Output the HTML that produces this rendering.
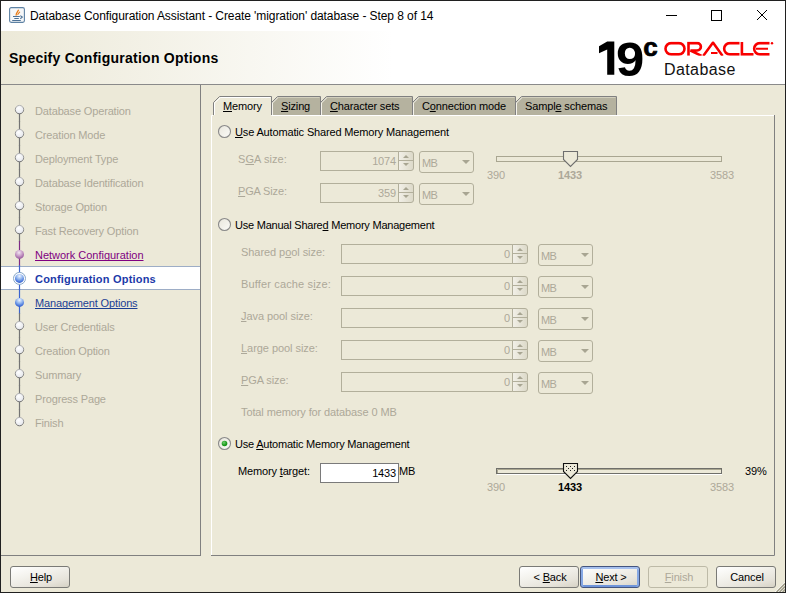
<!DOCTYPE html>
<html><head><meta charset="utf-8">
<style>
*{margin:0;padding:0;box-sizing:border-box}
html,body{width:786px;height:593px;overflow:hidden;background:#ECE9D8}
body{position:relative;font-family:"Liberation Sans",sans-serif;font-size:11px;color:#000}
.a{position:absolute;white-space:nowrap}
.t{letter-spacing:-0.15px;line-height:12px}
.ul{text-decoration:underline;text-decoration-skip-ink:none}
.btn{top:566px;height:22px;width:60px;border:1px solid #7A7A76;border-radius:3px;background:linear-gradient(165deg,#FFFFFF 0,#F4F3EE 35%,#E6E3DA 75%,#D6D2C5 100%)}
svg.ov{position:absolute;left:0;top:0}
</style></head><body>
<div class="a" style="left:0;top:0;width:786px;height:593px;border:1px solid #202020"></div>
<div class="a" style="left:1px;top:1px;width:784px;height:30px;background:#fff"></div>
<div class="a" style="left:1px;top:31px;width:784px;height:53px;background:linear-gradient(to right,#ECE9D8 0,#FFFFFF 392px)"></div>
<div class="a" style="left:1px;top:84px;width:784px;height:1px;background:#8A8A8A"></div>
<div class="a" style="left:200px;top:85px;width:1px;height:471px;background:#808080"></div>
<div class="a" style="left:1px;top:555px;width:200px;height:1px;background:#808080"></div>
<div class="a" style="left:1px;top:266px;width:199px;height:24px;background:#fff;border-top:1px solid #9DADC6;border-bottom:1px solid #9DADC6"></div>
<div class="a" style="left:320px;top:151px;width:79px;height:20px;border:1px solid #B2AF9B"></div>
<div class="a" style="left:419px;top:151px;width:55px;height:22px;border:1px solid #B2AF9B;border-radius:3px"></div>
<div class="a" style="left:320px;top:183px;width:79px;height:20px;border:1px solid #B2AF9B"></div>
<div class="a" style="left:419px;top:183px;width:55px;height:22px;border:1px solid #B2AF9B;border-radius:3px"></div>
<div class="a" style="left:341px;top:244px;width:172px;height:20px;border:1px solid #B2AF9B"></div>
<div class="a" style="left:538px;top:244px;width:55px;height:22px;border:1px solid #B2AF9B;border-radius:3px"></div>
<div class="a" style="left:341px;top:276px;width:172px;height:20px;border:1px solid #B2AF9B"></div>
<div class="a" style="left:538px;top:276px;width:55px;height:22px;border:1px solid #B2AF9B;border-radius:3px"></div>
<div class="a" style="left:341px;top:308px;width:172px;height:20px;border:1px solid #B2AF9B"></div>
<div class="a" style="left:538px;top:308px;width:55px;height:22px;border:1px solid #B2AF9B;border-radius:3px"></div>
<div class="a" style="left:341px;top:340px;width:172px;height:20px;border:1px solid #B2AF9B"></div>
<div class="a" style="left:538px;top:340px;width:55px;height:22px;border:1px solid #B2AF9B;border-radius:3px"></div>
<div class="a" style="left:341px;top:372px;width:172px;height:20px;border:1px solid #B2AF9B"></div>
<div class="a" style="left:538px;top:372px;width:55px;height:22px;border:1px solid #B2AF9B;border-radius:3px"></div>
<div class="a" style="left:320px;top:463px;width:79px;height:20px;background:#fff;border:1px solid #7A7A7A"></div>
<div class="a btn" style="left:10px"></div>
<div class="a btn" style="left:519px"></div>
<div class="a btn" style="left:580px;border-color:#44557F;box-shadow:inset 0 2px 0 #A6C0EE,inset 2px 0 0 #86A8E4,inset -2px 0 0 #86A8E4,inset 0 -2px 0 #6F95DA"></div>
<div class="a" style="left:648px;top:566px;width:60px;height:22px;border:1px solid #BDBAA7;border-radius:3px"></div>
<div class="a btn" style="left:716px"></div>
<svg class="ov" width="786" height="593" viewBox="0 0 786 593">
<defs>
<radialGradient id="gDis" cx="0.4" cy="0.35" r="0.7"><stop offset="0" stop-color="#FFFFFF"/><stop offset="1" stop-color="#E2E4EA"/></radialGradient>
<radialGradient id="gPur" cx="0.45" cy="0.3" r="0.75"><stop offset="0" stop-color="#F2E6F2"/><stop offset="0.5" stop-color="#C79BC7"/><stop offset="1" stop-color="#8E4C95"/></radialGradient>
<radialGradient id="gBlu" cx="0.5" cy="0.25" r="0.8"><stop offset="0" stop-color="#EEF4FF"/><stop offset="0.45" stop-color="#8DB2EE"/><stop offset="0.85" stop-color="#3A68D6"/><stop offset="1" stop-color="#2648B0"/></radialGradient>
<linearGradient id="gDisB" x1="0" y1="0" x2="0" y2="1"><stop offset="0" stop-color="#B4B4B4"/><stop offset="1" stop-color="#6E6E6E"/></linearGradient>
<linearGradient id="gRad" x1="0" y1="0" x2="1" y2="1"><stop offset="0" stop-color="#E8E6DC"/><stop offset="1" stop-color="#FBFBF8"/></linearGradient>
<radialGradient id="gGrn" cx="0.4" cy="0.35" r="0.7"><stop offset="0" stop-color="#74CF74"/><stop offset="0.6" stop-color="#22A022"/><stop offset="1" stop-color="#0C8A10"/></radialGradient>
<linearGradient id="gSpin" x1="0" y1="0" x2="1" y2="0"><stop offset="0" stop-color="#F2F0E8"/><stop offset="1" stop-color="#DCD9C8"/></linearGradient>
</defs>
<g>
 <rect x="9.6" y="7.6" width="14.8" height="14.8" rx="1.6" fill="#F6F7F8" stroke="#5E82A4" stroke-width="1.1"/>
 <path d="M16.3 15.6 C15.2 13.6 17.6 12.2 18.6 9.8" stroke="#EA7A12" stroke-width="1.3" fill="none"/>
 <path d="M17.9 15 C17.3 13.6 19.2 13.1 19.8 11.7" stroke="#EA7A12" stroke-width="1.1" fill="none"/>
 <path d="M13 16.5 H19.8 M14.3 18.5 H18.8 M12.2 20.5 H20.8" stroke="#4D7196" stroke-width="1.1"/>
 <path d="M20.3 15.6 L22.3 17.1 L20.3 18.7" stroke="#4D7196" stroke-width="1.1" fill="none"/>
</g>
<line x1="666" y1="15.5" x2="677" y2="15.5" stroke="#000" stroke-width="1"/>
<rect x="711.5" y="10.5" width="10" height="10" fill="none" stroke="#000" stroke-width="1"/>
<path d="M757 10 L767 20 M767 10 L757 20" stroke="#000" stroke-width="1"/>
<path d="M599 46.3 L607.2 41.6 H614.3 V74.8 H607.2 V49.6 L599 53.2 Z" fill="#000"/>
<clipPath id="clO"><rect x="660" y="41.6" width="120" height="14.2"/></clipPath>
<g fill="none" stroke="#F80000" stroke-width="2.6" clip-path="url(#clO)">
 <rect x="665.5" y="43.1" width="19" height="11.3" rx="5.65"/>
 <path d="M688.5 55.7 V43.1 H697.2 A3.7 3.7 0 0 1 697.2 50.5 H690.5 L701.5 55.8"/>
 <path d="M703.2 55.9 L713 42.6 L722.6 55.9"/>
 <path d="M711 53 H717.5" stroke-width="2.2"/>
 <path d="M739.5 43.1 H729.8 A5.65 5.65 0 0 0 729.8 54.4 H739.5"/>
 <path d="M741.9 42 V54.4 H753.5"/>
 <path d="M769.5 43.1 H759.8 A5.65 5.65 0 0 0 759.8 54.4 H769.5"/>
 <path d="M756 48.75 H768" stroke-width="2.2"/>
</g>
<circle cx="772" cy="43.3" r="1.2" fill="#F80000"/>
<line x1="19.5" y1="109.6" x2="19.5" y2="122.1" stroke="#747474" stroke-width="1.2"/>
<circle cx="19.5" cy="109.6" r="4.2" fill="url(#gDis)" stroke="url(#gDisB)" stroke-width="1"/>
<line x1="19.5" y1="121.1" x2="19.5" y2="133.6" stroke="#747474" stroke-width="1.2"/>
<line x1="19.5" y1="133.6" x2="19.5" y2="146.1" stroke="#747474" stroke-width="1.2"/>
<circle cx="19.5" cy="133.6" r="4.2" fill="url(#gDis)" stroke="url(#gDisB)" stroke-width="1"/>
<line x1="19.5" y1="145.1" x2="19.5" y2="157.6" stroke="#747474" stroke-width="1.2"/>
<line x1="19.5" y1="157.6" x2="19.5" y2="170.1" stroke="#747474" stroke-width="1.2"/>
<circle cx="19.5" cy="157.6" r="4.2" fill="url(#gDis)" stroke="url(#gDisB)" stroke-width="1"/>
<line x1="19.5" y1="169.1" x2="19.5" y2="181.6" stroke="#747474" stroke-width="1.2"/>
<line x1="19.5" y1="181.6" x2="19.5" y2="194.1" stroke="#747474" stroke-width="1.2"/>
<circle cx="19.5" cy="181.6" r="4.2" fill="url(#gDis)" stroke="url(#gDisB)" stroke-width="1"/>
<line x1="19.5" y1="193.1" x2="19.5" y2="205.6" stroke="#747474" stroke-width="1.2"/>
<line x1="19.5" y1="205.6" x2="19.5" y2="218.1" stroke="#747474" stroke-width="1.2"/>
<circle cx="19.5" cy="205.6" r="4.2" fill="url(#gDis)" stroke="url(#gDisB)" stroke-width="1"/>
<line x1="19.5" y1="217.1" x2="19.5" y2="229.6" stroke="#747474" stroke-width="1.2"/>
<line x1="19.5" y1="229.6" x2="19.5" y2="242.1" stroke="#747474" stroke-width="1.2"/>
<circle cx="19.5" cy="229.6" r="4.2" fill="url(#gDis)" stroke="url(#gDisB)" stroke-width="1"/>
<line x1="19.5" y1="241.1" x2="19.5" y2="253.6" stroke="#7E2A86" stroke-width="1.2"/>
<line x1="19.5" y1="253.6" x2="19.5" y2="266.1" stroke="#7E2A86" stroke-width="1.2"/>
<circle cx="19.5" cy="254.4" r="4.5" fill="url(#gPur)"/>
<line x1="19.5" y1="265.1" x2="19.5" y2="277.6" stroke="#3B63CF" stroke-width="1.2"/>
<line x1="19.5" y1="277.6" x2="19.5" y2="290.1" stroke="#3B63CF" stroke-width="1.2"/>
<circle cx="19.5" cy="278.40000000000003" r="6" fill="#fff" stroke="#86A6C8" stroke-width="1"/>
<circle cx="19.5" cy="278.40000000000003" r="4.5" fill="url(#gBlu)"/>
<line x1="19.5" y1="289.1" x2="19.5" y2="301.6" stroke="#3B63CF" stroke-width="1.2"/>
<line x1="19.5" y1="301.6" x2="19.5" y2="314.1" stroke="#3B63CF" stroke-width="1.2"/>
<circle cx="19.5" cy="302.40000000000003" r="4.5" fill="url(#gBlu)"/>
<line x1="19.5" y1="313.1" x2="19.5" y2="325.6" stroke="#747474" stroke-width="1.2"/>
<line x1="19.5" y1="325.6" x2="19.5" y2="338.1" stroke="#747474" stroke-width="1.2"/>
<circle cx="19.5" cy="325.6" r="4.2" fill="url(#gDis)" stroke="url(#gDisB)" stroke-width="1"/>
<line x1="19.5" y1="337.1" x2="19.5" y2="349.6" stroke="#747474" stroke-width="1.2"/>
<line x1="19.5" y1="349.6" x2="19.5" y2="362.1" stroke="#747474" stroke-width="1.2"/>
<circle cx="19.5" cy="349.6" r="4.2" fill="url(#gDis)" stroke="url(#gDisB)" stroke-width="1"/>
<line x1="19.5" y1="361.1" x2="19.5" y2="373.6" stroke="#747474" stroke-width="1.2"/>
<line x1="19.5" y1="373.6" x2="19.5" y2="386.1" stroke="#747474" stroke-width="1.2"/>
<circle cx="19.5" cy="373.6" r="4.2" fill="url(#gDis)" stroke="url(#gDisB)" stroke-width="1"/>
<line x1="19.5" y1="385.1" x2="19.5" y2="397.6" stroke="#747474" stroke-width="1.2"/>
<line x1="19.5" y1="397.6" x2="19.5" y2="410.1" stroke="#747474" stroke-width="1.2"/>
<circle cx="19.5" cy="397.6" r="4.2" fill="url(#gDis)" stroke="url(#gDisB)" stroke-width="1"/>
<line x1="19.5" y1="409.1" x2="19.5" y2="421.6" stroke="#747474" stroke-width="1.2"/>
<circle cx="19.5" cy="421.6" r="4.2" fill="url(#gDis)" stroke="url(#gDisB)" stroke-width="1"/>
<path d="M211.5 556 V115.5 H213" stroke="#fff" stroke-width="1" fill="none"/>
<path d="M271.5 115.5 H774.5 V555.5 H211" stroke="#fff" stroke-width="1" fill="none"/>
<path d="M774.5 115 V555.5 H211" stroke="#808080" stroke-width="1" fill="none"/>
<path d="M214.5 115 V103 L220.5 97.5 H270.5" stroke="#fff" fill="none"/>
<path d="M213.5 115 V102.5 L219.5 96.5 H271.5 V115" stroke="#808080" fill="none"/>
<path d="M272 115 V102.8 L277.8 97 H320 V115 Z" fill="#B5B29F"/>
<path d="M272.5 115 V103 L278 97.5" stroke="#F4F2EA" fill="none"/>
<path d="M278 97.5 H319.5" stroke="#D2CFBD" fill="none"/>
<path d="M277.5 96.5 H320.5 V115" stroke="#808080" fill="none"/>
<path d="M271.5 102.5 L277.5 96.5" stroke="#808080" fill="none"/>
<path d="M321 115 V102.8 L326.8 97 H412 V115 Z" fill="#B5B29F"/>
<path d="M321.5 115 V103 L327 97.5" stroke="#F4F2EA" fill="none"/>
<path d="M327 97.5 H411.5" stroke="#D2CFBD" fill="none"/>
<path d="M326.5 96.5 H412.5 V115" stroke="#808080" fill="none"/>
<path d="M320.5 102.5 L326.5 96.5" stroke="#808080" fill="none"/>
<path d="M413 115 V102.8 L418.8 97 H515 V115 Z" fill="#B5B29F"/>
<path d="M413.5 115 V103 L419 97.5" stroke="#F4F2EA" fill="none"/>
<path d="M419 97.5 H514.5" stroke="#D2CFBD" fill="none"/>
<path d="M418.5 96.5 H515.5 V115" stroke="#808080" fill="none"/>
<path d="M412.5 102.5 L418.5 96.5" stroke="#808080" fill="none"/>
<path d="M516 115 V102.8 L521.8 97 H616 V115 Z" fill="#B5B29F"/>
<path d="M516.5 115 V103 L522 97.5" stroke="#F4F2EA" fill="none"/>
<path d="M522 97.5 H615.5" stroke="#D2CFBD" fill="none"/>
<path d="M521.5 96.5 H616.5 V115" stroke="#808080" fill="none"/>
<path d="M515.5 102.5 L521.5 96.5" stroke="#808080" fill="none"/>
<circle cx="224.5" cy="131.5" r="6" fill="url(#gRad)" stroke="#8A8A8A" stroke-width="1.1"/>
<circle cx="224.5" cy="224.5" r="6" fill="url(#gRad)" stroke="#8A8A8A" stroke-width="1.1"/>
<circle cx="224.5" cy="443.5" r="6" fill="url(#gRad)" stroke="#8A8A8A" stroke-width="1.1"/>
<circle cx="224.5" cy="443.5" r="2.8" fill="url(#gGrn)"/>
<path d="M398.5 151.5 H411 Q413.5 151.5 413.5 154 V168 Q413.5 170.5 411 170.5 H398.5 Z" fill="url(#gSpin)" stroke="#B2AF9B"/>
<line x1="399" y1="160.5" x2="413" y2="160.5" stroke="#B2AF9B"/>
<path d="M403.0 158 L406.0 155 L409.0 158 Z" fill="#A8A592"/>
<path d="M403.0 163 L406.0 166 L409.0 163 Z" fill="#A8A592"/>
<path d="M462 160 H470 L466 164 Z" fill="#A8A592"/>
<path d="M398.5 183.5 H411 Q413.5 183.5 413.5 186 V200 Q413.5 202.5 411 202.5 H398.5 Z" fill="url(#gSpin)" stroke="#B2AF9B"/>
<line x1="399" y1="192.5" x2="413" y2="192.5" stroke="#B2AF9B"/>
<path d="M403.0 190 L406.0 187 L409.0 190 Z" fill="#A8A592"/>
<path d="M403.0 195 L406.0 198 L409.0 195 Z" fill="#A8A592"/>
<path d="M462 192 H470 L466 196 Z" fill="#A8A592"/>
<rect x="496.5" y="156.5" width="225" height="5" fill="#ECE9D8" stroke="#A9A691"/>
<path d="M563.5 151.5 H577.5 V159.5 L570.5 166.5 L563.5 159.5 Z" fill="#ECE9D8" stroke="#6E6E6E" stroke-width="1.1"/>
<path d="M512.5 244.5 H525 Q527.5 244.5 527.5 247 V261 Q527.5 263.5 525 263.5 H512.5 Z" fill="url(#gSpin)" stroke="#B2AF9B"/>
<line x1="513" y1="253.5" x2="527" y2="253.5" stroke="#B2AF9B"/>
<path d="M517.0 251 L520.0 248 L523.0 251 Z" fill="#A8A592"/>
<path d="M517.0 256 L520.0 259 L523.0 256 Z" fill="#A8A592"/>
<path d="M581 253 H589 L585 257 Z" fill="#A8A592"/>
<path d="M512.5 276.5 H525 Q527.5 276.5 527.5 279 V293 Q527.5 295.5 525 295.5 H512.5 Z" fill="url(#gSpin)" stroke="#B2AF9B"/>
<line x1="513" y1="285.5" x2="527" y2="285.5" stroke="#B2AF9B"/>
<path d="M517.0 283 L520.0 280 L523.0 283 Z" fill="#A8A592"/>
<path d="M517.0 288 L520.0 291 L523.0 288 Z" fill="#A8A592"/>
<path d="M581 285 H589 L585 289 Z" fill="#A8A592"/>
<path d="M512.5 308.5 H525 Q527.5 308.5 527.5 311 V325 Q527.5 327.5 525 327.5 H512.5 Z" fill="url(#gSpin)" stroke="#B2AF9B"/>
<line x1="513" y1="317.5" x2="527" y2="317.5" stroke="#B2AF9B"/>
<path d="M517.0 315 L520.0 312 L523.0 315 Z" fill="#A8A592"/>
<path d="M517.0 320 L520.0 323 L523.0 320 Z" fill="#A8A592"/>
<path d="M581 317 H589 L585 321 Z" fill="#A8A592"/>
<path d="M512.5 340.5 H525 Q527.5 340.5 527.5 343 V357 Q527.5 359.5 525 359.5 H512.5 Z" fill="url(#gSpin)" stroke="#B2AF9B"/>
<line x1="513" y1="349.5" x2="527" y2="349.5" stroke="#B2AF9B"/>
<path d="M517.0 347 L520.0 344 L523.0 347 Z" fill="#A8A592"/>
<path d="M517.0 352 L520.0 355 L523.0 352 Z" fill="#A8A592"/>
<path d="M581 349 H589 L585 353 Z" fill="#A8A592"/>
<path d="M512.5 372.5 H525 Q527.5 372.5 527.5 375 V389 Q527.5 391.5 525 391.5 H512.5 Z" fill="url(#gSpin)" stroke="#B2AF9B"/>
<line x1="513" y1="381.5" x2="527" y2="381.5" stroke="#B2AF9B"/>
<path d="M517.0 379 L520.0 376 L523.0 379 Z" fill="#A8A592"/>
<path d="M517.0 384 L520.0 387 L523.0 384 Z" fill="#A8A592"/>
<path d="M581 381 H589 L585 385 Z" fill="#A8A592"/>
<rect x="496.5" y="468.5" width="225" height="5" fill="#ECE9D8" stroke="#6F6F6A"/>
<path d="M497.5 473 V469.5 H721" stroke="#A9A690" fill="none"/>
<line x1="497" y1="474.5" x2="722" y2="474.5" stroke="#fff"/>
<path d="M563.5 463.5 H577.5 V471.5 L570.5 478.5 L563.5 471.5 Z" fill="#ECE9D8" stroke="#111" stroke-width="1.1"/>
<rect x="566" y="466" width="1" height="1" fill="#222"/>
<rect x="570" y="466" width="1" height="1" fill="#222"/>
<rect x="574" y="466" width="1" height="1" fill="#222"/>
<rect x="568" y="468" width="1" height="1" fill="#222"/>
<rect x="572" y="468" width="1" height="1" fill="#222"/>
<rect x="566" y="470" width="1" height="1" fill="#222"/>
<rect x="570" y="470" width="1" height="1" fill="#222"/>
<rect x="574" y="470" width="1" height="1" fill="#222"/>
<clipPath id="clG"><rect x="770" y="578" width="15" height="14"/></clipPath><g clip-path="url(#clG)"><path d="M775.2 592 L785 582.2 M778.2 592 L785 585.2 M781.2 592 L785 588.2" stroke="#FFFFFF" stroke-width="1"/><path d="M776.6 592 L785 583.6 M779.6 592 L785 586.6 M782.6 592 L785 589.6" stroke="#A09D88" stroke-width="1.5"/></g>
</svg>
<div class="a" style="left:30px;top:9px;font-size:12px;line-height:15px;letter-spacing:-0.08px">Database Configuration Assistant - Create 'migration' database - Step 8 of 14</div>
<div class="a" style="left:9px;top:50px;font-size:14px;font-weight:bold;line-height:16px;letter-spacing:0.25px">Specify Configuration Options</div>
<div class="a" style="left:616px;top:34.6px;font-size:48px;font-weight:bold;line-height:50px;transform:scaleX(1.06);transform-origin:0 0">9</div>
<div class="a" style="left:643.3px;top:32.7px;font-size:26px;font-weight:bold;line-height:28px;-webkit-text-stroke:0.7px #000">c</div>
<div class="a" style="left:664px;top:61px;font-size:16px;line-height:18px;letter-spacing:0.4px;color:#111">Database</div>
<div class="a t" style="left:35px;top:105px;color:#ACA899">Database Operation</div>
<div class="a t" style="left:35px;top:129px;color:#ACA899">Creation Mode</div>
<div class="a t" style="left:35px;top:153px;color:#ACA899">Deployment Type</div>
<div class="a t" style="left:35px;top:177px;color:#ACA899">Database Identification</div>
<div class="a t" style="left:35px;top:201px;color:#ACA899">Storage Option</div>
<div class="a t" style="left:35px;top:225px;color:#ACA899">Fast Recovery Option</div>
<div class="a t" style="left:35px;top:249px;color:#800080;letter-spacing:-0.015px"><span class="ul">Network Configuration</span></div>
<div class="a t" style="left:35px;top:273px;color:#1C3AA9;font-weight:bold;letter-spacing:0.2px">Configuration Options</div>
<div class="a t" style="left:35px;top:297px;color:#1C3F94"><span class="ul">Management Options</span></div>
<div class="a t" style="left:35px;top:321px;color:#ACA899">User Credentials</div>
<div class="a t" style="left:35px;top:345px;color:#ACA899">Creation Option</div>
<div class="a t" style="left:35px;top:369px;color:#ACA899">Summary</div>
<div class="a t" style="left:35px;top:393px;color:#ACA899">Progress Page</div>
<div class="a t" style="left:35px;top:417px;color:#ACA899">Finish</div>
<div class="a t" style="left:223px;top:100px;"><span class="ul">M</span>emory</div>
<div class="a t" style="left:281px;top:100px;"><span class="ul">S</span>izing</div>
<div class="a t" style="left:330px;top:100px;"><span class="ul">C</span>haracter sets</div>
<div class="a t" style="left:422px;top:100px;">C<span class="ul">o</span>nnection mode</div>
<div class="a t" style="left:525px;top:100px;">Sampl<span class="ul">e</span> schemas</div>
<div class="a t" style="left:235px;top:126px;"><span class="ul">U</span>se Automatic Shared Memory Management</div>
<div class="a t" style="left:235px;top:219px;letter-spacing:-0.225px">Use Manual Share<span class="ul">d</span> Memory Management</div>
<div class="a t" style="left:235px;top:438px;letter-spacing:-0.21px">Use <span class="ul">A</span>utomatic Memory Management</div>
<div class="a t" style="left:238px;top:153px;color:#ACA899;letter-spacing:0.06px">S<span class="ul">G</span>A size:</div>
<div class="a t" style="left:320px;top:155px;width:76px;text-align:right;color:#ACA899">1074</div>
<div class="a t" style="left:422px;top:157px;color:#ACA899;letter-spacing:-0.6px">MB</div>
<div class="a t" style="left:238px;top:185px;color:#ACA899"><span class="ul">P</span>GA Size:</div>
<div class="a t" style="left:320px;top:187px;width:76px;text-align:right;color:#ACA899">359</div>
<div class="a t" style="left:422px;top:189px;color:#ACA899;letter-spacing:-0.6px">MB</div>
<div class="a t" style="left:487px;top:169px;color:#ACA899">390</div>
<div class="a t" style="left:558px;top:169px;color:#ACA899;font-weight:bold">1433</div>
<div class="a t" style="left:710px;top:169px;color:#ACA899">3583</div>
<div class="a t" style="left:241px;top:246px;color:#ACA899;letter-spacing:-0.06px">Shared p<span class="ul">o</span>ol size:</div>
<div class="a t" style="left:341px;top:248px;width:169px;text-align:right;color:#ACA899">0</div>
<div class="a t" style="left:541px;top:250px;color:#ACA899;letter-spacing:-0.6px">MB</div>
<div class="a t" style="left:241px;top:278px;color:#ACA899;letter-spacing:0.15px">Buffer cache s<span class="ul">i</span>ze:</div>
<div class="a t" style="left:341px;top:280px;width:169px;text-align:right;color:#ACA899">0</div>
<div class="a t" style="left:541px;top:282px;color:#ACA899;letter-spacing:-0.6px">MB</div>
<div class="a t" style="left:241px;top:310px;color:#ACA899;letter-spacing:-0.07px"><span class="ul">J</span>ava pool size:</div>
<div class="a t" style="left:341px;top:312px;width:169px;text-align:right;color:#ACA899">0</div>
<div class="a t" style="left:541px;top:314px;color:#ACA899;letter-spacing:-0.6px">MB</div>
<div class="a t" style="left:241px;top:342px;color:#ACA899;letter-spacing:-0.05px"><span class="ul">L</span>arge pool size:</div>
<div class="a t" style="left:341px;top:344px;width:169px;text-align:right;color:#ACA899">0</div>
<div class="a t" style="left:541px;top:346px;color:#ACA899;letter-spacing:-0.6px">MB</div>
<div class="a t" style="left:241px;top:374px;color:#ACA899;letter-spacing:-0.1px"><span class="ul">P</span>GA size:</div>
<div class="a t" style="left:341px;top:376px;width:169px;text-align:right;color:#ACA899">0</div>
<div class="a t" style="left:541px;top:378px;color:#ACA899;letter-spacing:-0.6px">MB</div>
<div class="a t" style="left:241px;top:406px;color:#ACA899;letter-spacing:-0.11px">Total memory for database 0 MB</div>
<div class="a t" style="left:238px;top:465px;">Memory <span class="ul">t</span>arget:</div>
<div class="a t" style="left:320px;top:467px;width:76px;text-align:right">1433</div>
<div class="a t" style="left:399px;top:465px;">MB</div>
<div class="a t" style="left:487px;top:481px;color:#ACA899">390</div>
<div class="a t" style="left:558px;top:481px;font-weight:bold">1433</div>
<div class="a t" style="left:710px;top:481px;color:#ACA899">3583</div>
<div class="a t" style="left:745px;top:465px;">39%</div>
<div class="a t" style="left:11px;top:571px;width:60px;text-align:center"><span class="ul">H</span>elp</div>
<div class="a t" style="left:520px;top:571px;width:60px;text-align:center">&lt; <span class="ul">B</span>ack</div>
<div class="a t" style="left:581px;top:571px;width:60px;text-align:center"><span class="ul">N</span>ext &gt;</div>
<div class="a t" style="left:649px;top:571px;width:60px;text-align:center;color:#ACA899"><span class="ul">F</span>inish</div>
<div class="a t" style="left:717px;top:571px;width:60px;text-align:center">Cancel</div>
</body></html>
